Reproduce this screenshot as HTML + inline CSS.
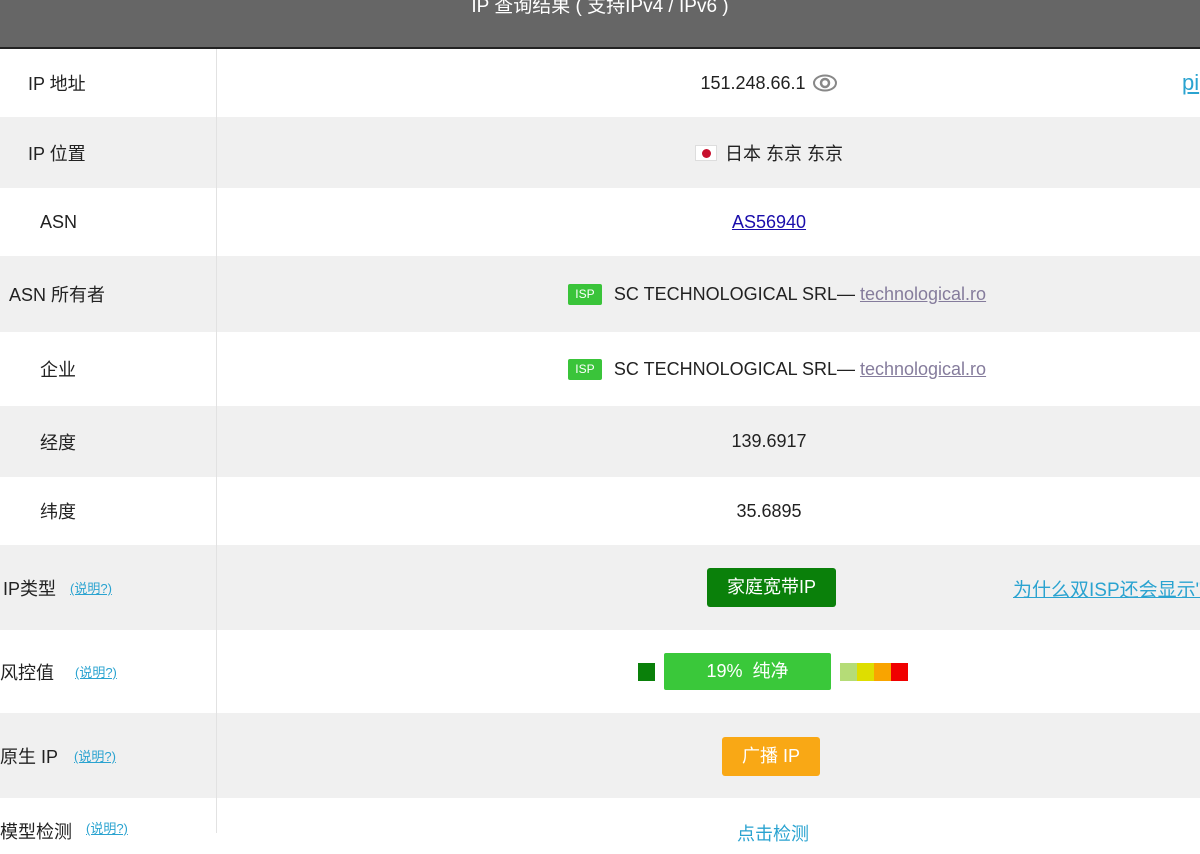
<!DOCTYPE html>
<html><head><meta charset="utf-8"><style>
*{margin:0;padding:0;box-sizing:border-box}
body{width:1200px;height:833px;overflow:hidden;background:#fff;font-family:"Liberation Sans","Noto Sans CJK SC",sans-serif;color:#222;font-size:18px;position:relative}
.hdr{position:absolute;left:0;top:0;width:1200px;height:47px;background:#666;color:#fff;text-align:center;font-size:19px;line-height:14px}
.hline{position:absolute;left:0;top:47px;width:1200px;height:2px;background:#222}
.row{position:absolute;left:0;width:1200px}
.g{background:#f0f0f0}
.vd{position:absolute;left:216px;top:49px;width:1px;height:784px;background:#e2e2e2}
.lab{position:absolute;left:0;width:216px;display:flex;align-items:center}
.val{position:absolute;left:217px;width:1134px;display:flex;align-items:center;justify-content:center}
.sm{color:#2aa3d0;text-decoration:underline;font-size:13px}
.isp{display:inline-block;background:#3ac43a;color:#fff;font-size:12px;width:34px;height:21px;line-height:21px;text-align:center;border-radius:2px;margin-right:12px}
a{color:#1a0dab;text-decoration:underline}
</style></head><body>
<div class="hdr">IP 查询结果 ( 支持IPv4 / IPv6 )</div>
<div class="hline"></div>
<div class="row" style="top:49px;height:68px"></div>
<div class="row g" style="top:117px;height:71px"></div>
<div class="row" style="top:188px;height:68px"></div>
<div class="row g" style="top:256px;height:76px"></div>
<div class="row" style="top:332px;height:74px"></div>
<div class="row g" style="top:406px;height:71px"></div>
<div class="row" style="top:477px;height:68px"></div>
<div class="row g" style="top:545px;height:85px"></div>
<div class="row" style="top:630px;height:83px"></div>
<div class="row g" style="top:713px;height:85px"></div>
<div class="row" style="top:798px;height:35px"></div>
<div class="vd"></div>

<div class="lab" style="top:49px;height:68px;padding-left:28px">IP 地址</div>
<div class="val" style="top:49px;height:68px;padding-right:30px">151.248.66.1 <svg width="26" height="20" viewBox="0 0 26 20" style="margin-left:6px"><ellipse cx="13" cy="10" rx="11" ry="7.5" fill="none" stroke="#888" stroke-width="2"/><circle cx="13" cy="10" r="4" fill="none" stroke="#888" stroke-width="2.5"/></svg></div>
<div style="position:absolute;left:1182px;top:70px;color:#2aa3d0;font-size:22px;text-decoration:underline">pi</div>

<div class="lab" style="top:117px;height:71px;padding-left:28px">IP 位置</div>
<div class="val" style="top:117px;height:71px;padding-right:30px"><span style="display:inline-block;width:22px;height:16px;background:#fff;border:1px solid #ddd;position:relative;margin-right:8px"><span style="position:absolute;left:6px;top:3px;width:9px;height:9px;border-radius:50%;background:#c8102e"></span></span>日本 东京 东京</div>

<div class="lab" style="top:188px;height:68px;padding-left:40px">ASN</div>
<div class="val" style="top:188px;height:68px;padding-right:30px"><a>AS56940</a></div>

<div class="lab" style="top:256px;height:76px;padding-left:9px">ASN 所有者</div>
<div class="val" style="top:256px;height:76px;padding-right:14px"><span class="isp">ISP</span>SC TECHNOLOGICAL SRL— <a style="color:#857c9c;margin-left:5px">technological.ro</a></div>

<div class="lab" style="top:332px;height:74px;padding-left:40px">企业</div>
<div class="val" style="top:332px;height:74px;padding-right:14px"><span class="isp">ISP</span>SC TECHNOLOGICAL SRL— <a style="color:#857c9c;margin-left:5px">technological.ro</a></div>

<div class="lab" style="top:406px;height:71px;padding-left:40px">经度</div>
<div class="val" style="top:406px;height:71px;padding-right:30px">139.6917</div>

<div class="lab" style="top:477px;height:68px;padding-left:40px">纬度</div>
<div class="val" style="top:477px;height:68px;padding-right:30px">35.6895</div>

<div class="lab" style="top:545px;height:85px;padding-left:3px">IP类型<span class="sm" style="margin-left:14px">(说明?)</span></div>
<div style="position:absolute;left:707px;top:568px;width:129px;height:39px;background:#0a800a;color:#fff;border-radius:3px;text-align:center;line-height:39px">家庭宽带IP</div>
<div style="position:absolute;left:1013px;top:575px;color:#2aa3d0;font-size:19px;text-decoration:underline;white-space:nowrap">为什么双ISP还会显示"</div>

<div class="lab" style="top:630px;height:83px;padding-left:0">风控值<span class="sm" style="margin-left:21px">(说明?)</span></div>
<div style="position:absolute;left:638px;top:663px;width:17px;height:18px;background:#0a800a"></div>
<div style="position:absolute;left:664px;top:653px;width:167px;height:37px;background:#3ac83a;color:#fff;border-radius:2px;text-align:center;line-height:37px">19% &nbsp;纯净</div>
<div style="position:absolute;left:840px;top:663px;width:17px;height:18px;background:#b5dc77"></div>
<div style="position:absolute;left:857px;top:663px;width:17px;height:18px;background:#dede00"></div>
<div style="position:absolute;left:874px;top:663px;width:17px;height:18px;background:#f9a400"></div>
<div style="position:absolute;left:891px;top:663px;width:17px;height:18px;background:#f00000"></div>

<div class="lab" style="top:713px;height:85px;padding-left:0">原生 IP<span class="sm" style="margin-left:16px">(说明?)</span></div>
<div style="position:absolute;left:722px;top:737px;width:98px;height:39px;background:#f9a815;color:#fff;border-radius:3px;text-align:center;line-height:39px">广播 IP</div>

<div class="lab" style="top:818px;height:36px;padding-left:0;align-items:flex-start">模型检测<span class="sm" style="margin-left:14px">(说明?)</span></div>
<div style="position:absolute;left:737px;top:820px;color:#2aa3d0">点击检测</div>
</body></html>
